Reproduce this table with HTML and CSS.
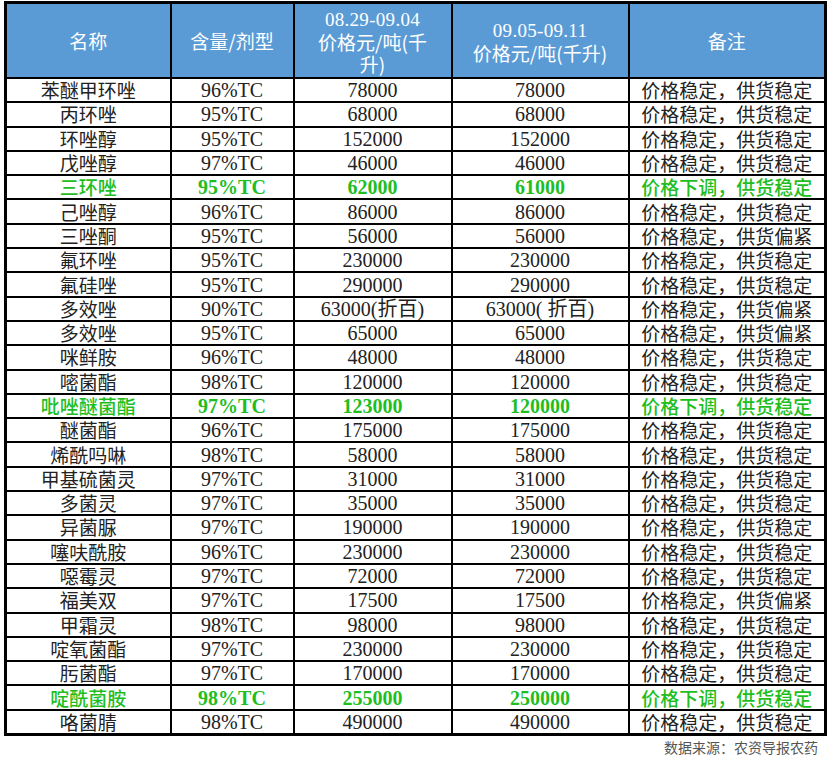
FILE: index.html
```html
<!DOCTYPE html>
<html lang="zh">
<head>
<meta charset="utf-8">
<link rel="stylesheet" href="styles.css">
</head>
<body>
<div class="page">
<table class="price">
<colgroup>
<col class="c1"><col class="c2"><col class="c3"><col class="c4"><col class="c5">
</colgroup>
<thead>
<tr>
<th>名称</th>
<th>含量/剂型</th>
<th><span class="num">08.29-09.04</span><br>价格元/吨(千<br>升)</th>
<th><span class="num">09.05-09.11</span><br>价格元/吨(千升)</th>
<th>备注</th>
</tr>
</thead>
<tbody>
<tr><td>苯醚甲环唑</td><td class="num">96%TC</td><td class="num">78000</td><td class="num">78000</td><td>价格稳定，供货稳定</td></tr>
<tr><td>丙环唑</td><td class="num">95%TC</td><td class="num">68000</td><td class="num">68000</td><td>价格稳定，供货稳定</td></tr>
<tr><td>环唑醇</td><td class="num">95%TC</td><td class="num">152000</td><td class="num">152000</td><td>价格稳定，供货稳定</td></tr>
<tr><td>戊唑醇</td><td class="num">97%TC</td><td class="num">46000</td><td class="num">46000</td><td>价格稳定，供货稳定</td></tr>
<tr class="down"><td>三环唑</td><td class="num">95%TC</td><td class="num">62000</td><td class="num">61000</td><td>价格下调，供货稳定</td></tr>
<tr><td>己唑醇</td><td class="num">96%TC</td><td class="num">86000</td><td class="num">86000</td><td>价格稳定，供货稳定</td></tr>
<tr><td>三唑酮</td><td class="num">95%TC</td><td class="num">56000</td><td class="num">56000</td><td>价格稳定，供货偏紧</td></tr>
<tr><td>氟环唑</td><td class="num">95%TC</td><td class="num">230000</td><td class="num">230000</td><td>价格稳定，供货稳定</td></tr>
<tr><td>氟硅唑</td><td class="num">95%TC</td><td class="num">290000</td><td class="num">290000</td><td>价格稳定，供货稳定</td></tr>
<tr><td>多效唑</td><td class="num">90%TC</td><td class="num">63000(折百)</td><td class="num">63000( 折百)</td><td>价格稳定，供货偏紧</td></tr>
<tr><td>多效唑</td><td class="num">95%TC</td><td class="num">65000</td><td class="num">65000</td><td>价格稳定，供货偏紧</td></tr>
<tr><td>咪鲜胺</td><td class="num">96%TC</td><td class="num">48000</td><td class="num">48000</td><td>价格稳定，供货稳定</td></tr>
<tr><td>嘧菌酯</td><td class="num">98%TC</td><td class="num">120000</td><td class="num">120000</td><td>价格稳定，供货稳定</td></tr>
<tr class="down"><td>吡唑醚菌酯</td><td class="num">97%TC</td><td class="num">123000</td><td class="num">120000</td><td>价格下调，供货稳定</td></tr>
<tr><td>醚菌酯</td><td class="num">96%TC</td><td class="num">175000</td><td class="num">175000</td><td>价格稳定，供货稳定</td></tr>
<tr><td>烯酰吗啉</td><td class="num">98%TC</td><td class="num">58000</td><td class="num">58000</td><td>价格稳定，供货稳定</td></tr>
<tr><td>甲基硫菌灵</td><td class="num">97%TC</td><td class="num">31000</td><td class="num">31000</td><td>价格稳定，供货稳定</td></tr>
<tr><td>多菌灵</td><td class="num">97%TC</td><td class="num">35000</td><td class="num">35000</td><td>价格稳定，供货稳定</td></tr>
<tr><td>异菌脲</td><td class="num">97%TC</td><td class="num">190000</td><td class="num">190000</td><td>价格稳定，供货稳定</td></tr>
<tr><td>噻呋酰胺</td><td class="num">96%TC</td><td class="num">230000</td><td class="num">230000</td><td>价格稳定，供货稳定</td></tr>
<tr><td>噁霉灵</td><td class="num">97%TC</td><td class="num">72000</td><td class="num">72000</td><td>价格稳定，供货稳定</td></tr>
<tr><td>福美双</td><td class="num">97%TC</td><td class="num">17500</td><td class="num">17500</td><td>价格稳定，供货偏紧</td></tr>
<tr><td>甲霜灵</td><td class="num">98%TC</td><td class="num">98000</td><td class="num">98000</td><td>价格稳定，供货稳定</td></tr>
<tr><td>啶氧菌酯</td><td class="num">97%TC</td><td class="num">230000</td><td class="num">230000</td><td>价格稳定，供货稳定</td></tr>
<tr><td>肟菌酯</td><td class="num">97%TC</td><td class="num">170000</td><td class="num">170000</td><td>价格稳定，供货稳定</td></tr>
<tr class="down"><td>啶酰菌胺</td><td class="num">98%TC</td><td class="num">255000</td><td class="num">250000</td><td>价格下调，供货稳定</td></tr>
<tr><td>咯菌腈</td><td class="num">98%TC</td><td class="num">490000</td><td class="num">490000</td><td>价格稳定，供货稳定</td></tr>
</tbody>
</table>
<p class="source">数据来源：农资导报农药</p>
</div>
</body>
</html>
```

FILE: styles.css
```css
html, body {
  margin: 0;
  padding: 0;
  background: #ffffff;
}

.page {
  padding: 1px 0 0 4px;
  font-family: "Liberation Serif", "Noto Sans CJK SC", serif;
  color: #222222;
}

.price {
  width: 820px;
  table-layout: fixed;
  border-collapse: collapse;
  border: 3px solid #000;
}

.c1 { width: 165px; }
.c2 { width: 123px; }
.c3 { width: 158px; }
.c4 { width: 177px; }
.c5 { width: 197px; }

.price th,
.price td {
  border: 2px solid #000;
  padding: 0;
  text-align: center;
  vertical-align: middle;
  white-space: nowrap;
}

.price th {
  background: #5b9bd5;
  color: #ffffff;
  font-weight: normal;
  font-family: "Noto Sans CJK SC", sans-serif;
  font-size: 19px;
  line-height: 22px;
  height: 73px;
}

.price th .num {
  font-family: "Liberation Serif", serif;
  letter-spacing: 0.3px;
}

.price td {
  font-family: "Noto Sans CJK SC", sans-serif;
  font-size: 19px;
  line-height: 22px;
  height: 22.3px;
}

.price td.num {
  font-family: "Liberation Serif", "Noto Sans CJK SC", serif;
  font-size: 20px;
}

.price tr.down td {
  color: #1fbe1f;
  font-weight: 500;
}

.price tr.down td.num {
  font-weight: bold;
}

.source {
  margin: 2px 10px 0 0;
  text-align: right;
  font-family: "Noto Sans CJK SC", sans-serif;
  font-size: 14px;
  line-height: 18px;
  color: #555555;
}
```
